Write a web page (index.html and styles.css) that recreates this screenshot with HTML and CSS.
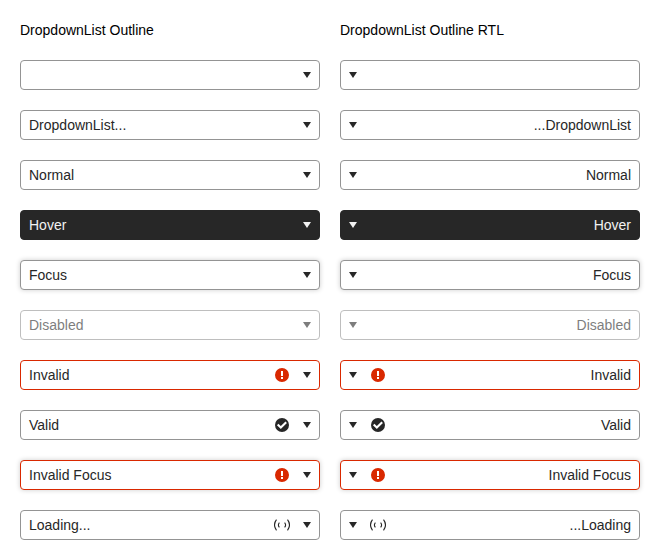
FILE: index.html
```html
<!DOCTYPE html>
<html lang="en">
<head>
<meta charset="utf-8">
<title>DropdownList Outline</title>
<link rel="stylesheet" href="styles.css">
</head>
<body>
<main id="app" class="grid"></main>
<script src="app.js"></script>
</body>
</html>
```
FILE: styles.css
```css
* { box-sizing: border-box; }
body { margin: 0; background: #fff; color: #272727; font: 14px/20px "Liberation Sans", Arial, sans-serif; }
.grid { display: grid; grid-template-columns: 300px 300px; gap: 20px; padding: 20px; }
.title { height: 20px; color: #000; }
.dropdown { display: flex; height: 30px; border: 1px solid #949494; border-radius: 4px; background: #fff; overflow: hidden; }
.value { flex: 1; padding: 4px 8px; white-space: nowrap; }
.status { width: 16px; height: 16px; margin: 6px 5px; flex: none; }
.button { width: 24px; height: 28px; display: flex; align-items: center; justify-content: center; flex: none; }
.icon { width: 16px; height: 16px; display: block; fill: currentColor; }
.hover { background: #272727; border-color: #272727; color: #f2f2f2; }
.focus { box-shadow: 0 0 5px rgba(0, 0, 0, .2); }
.disabled { opacity: .6; }
.invalid { border-color: #d92800; }
.invalid .status { color: #d92800; }
```
FILE: app.js
```js
const icons = {
  error: '<svg class="icon" viewBox="0 0 16 16"><path fill-rule="evenodd" d="M8 1a7 7 0 1 0 0 14A7 7 0 0 0 8 1zM7 4v5h2V4zM7 10v2h2v-2z"/></svg>',
  check: '<svg class="icon" viewBox="0 0 16 16"><circle cx="8" cy="8" r="7"/><path d="M3.700 7.500 6.800 10.500 12.200 5.200" fill="none" stroke="#fff" stroke-width="2.100"/></svg>',
  loading: '<svg class="icon" viewBox="0 0 16 16"><path d="M2.500 2.700q-4 5.300 0 10.600M13.500 2.700q4 5.300 0 10.600M5.400 5.600q-2 2.400 0 4.800M10.600 5.600q2 2.400 0 4.800" fill="none" stroke="currentColor" stroke-width="1.100"/></svg>',
  arrow: '<svg class="icon" viewBox="0 0 16 16"><path d="M4 5h8l-4 6z"/></svg>'
};
const rows = [
  ['', ''], ['DropdownList...', ''], ['Normal', ''], ['Hover', 'hover'], ['Focus', 'focus'],
  ['Disabled', 'disabled'], ['Invalid', 'invalid', 'error'], ['Valid', '', 'check'],
  ['Invalid Focus', 'invalid focus', 'error'], ['Loading...', '', 'loading']
];
const dropdown = (dir, [text, state, icon]) => `<div class="dropdown ${state}" dir="${dir}"><span class="value">${text}</span>${icon ? `<span class="status">${icons[icon]}</span>` : ''}<span class="button">${icons.arrow}</span></div>`;
document.getElementById('app').innerHTML =
  '<div class="title">DropdownList Outline</div><div class="title">DropdownList Outline RTL</div>' +
  rows.map(r => dropdown('ltr', r) + dropdown('rtl', r)).join('');
```
